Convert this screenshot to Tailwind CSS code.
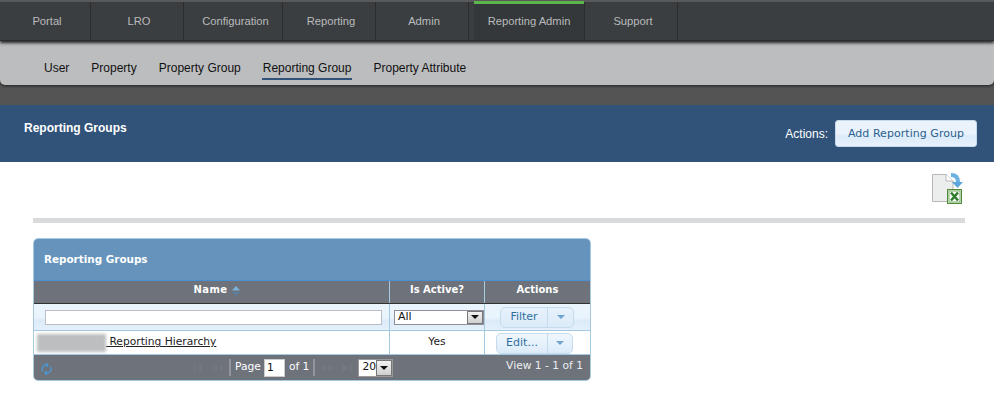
<!DOCTYPE html>
<html><head><meta charset="utf-8">
<script src="https://cdn.jsdelivr.net/npm/@tailwindcss/browser@4"></script>
</head>
<body class="bg-white w-[994px] h-[412px] overflow-hidden font-['Liberation_Sans',sans-serif]">
<div class="bg-[#545454] h-[105px] flex flex-col">
  <nav class="h-[41px] flex bg-[#3b3e40] border-t-2 border-[#58595a] border-b border-b-[#2c2c2c] text-[11.200px] text-[#b9bbbd] shrink-0 shadow-[0_2px_3px_#222] relative z-10">
    <a class="w-[91px] flex items-center justify-center border-r border-[#2a2c2e] pt-[1px] pl-[4px]">Portal</a>
    <a class="w-[93px] flex items-center justify-center border-r border-[#2a2c2e] pt-[1px] pl-[4px]">LRO</a>
    <a class="w-[99px] flex items-center justify-center border-r border-[#2a2c2e] pt-[1px] pl-[5px]">Configuration</a>
    <a class="w-[93px] flex items-center justify-center border-r border-[#2a2c2e] pt-[1px] pl-[4px]">Reporting</a>
    <a class="w-[93px] flex items-center justify-center border-r border-[#2a2c2e] pt-[1px] pl-[4px]">Admin</a>
    <div class="w-[116px] flex border-r border-[#2a2c2e] pl-[5px]"><a class="flex-1 flex items-center justify-center border-t-[3px] border-[#5cb54a] -mt-[1px] bg-[#35383a] pb-[1px]">Reporting Admin</a></div>
    <a class="w-[93px] flex items-center justify-center border-r border-[#2a2c2e] pt-[1px] pl-[4px]">Support</a>
  </nav>
  <div class="h-[44px] bg-[#bcbdbf] rounded-b-[5px] flex items-center pl-[44px] gap-[22px] text-[12px] text-[#111] shadow-[0_1px_3px_#222] pt-[11px]">
    <a class="pb-[2px]">User</a>
    <a class="pb-[2px]">Property</a>
    <a class="pb-[2px]">Property Group</a>
    <a class="pb-[1px] border-b-2 border-[#31537a] px-[1px] -mx-[1px] mt-[1px]">Reporting Group</a>
    <a class="pb-[2px]">Property Attribute</a>
  </div>
</div>
<header class="h-[57px] bg-[#31537a] flex justify-between items-start text-white text-[12px] pl-[24px] pr-[17px]">
  <h1 class="font-bold mt-[14px]">Reporting Groups</h1>
  <div class="flex items-center gap-[7px] mt-[15px]">
    <span>Actions:</span>
    <button class="w-[142px] h-[27px] pt-[1px] rounded-[3px] bg-[linear-gradient(#eaf3fb_50%,#dcebf9_60%,#e6f1fb)] border border-[#c5dbec] text-[#2a5f8f] font-['DejaVu_Sans',sans-serif] text-[11px] tracking-[0.050px]">Add Reporting Group</button>
  </div>
</header>
<main class="px-[33px] relative">
  <div class="flex justify-end -mr-[2px] h-[56px] items-start pt-[11px]">
    <svg width="32" height="33" viewBox="0 0 32 33">
      <path d="M1.500 1.500H15L22 8V28.500H1.500Z" fill="#eceded" stroke="#b5b6b8"/>
      <path d="M15 1.500V8H22" fill="#fff" stroke="#b5b6b8"/>
      <path d="M20 2C25 2 27 5 27 9" fill="none" stroke="#6db0e2" stroke-width="4"/>
      <path d="M21 9H32L26.500 15Z" fill="#5ba5dd"/>
      <rect x="16.500" y="16.500" width="14" height="14" fill="#e8f3e2" stroke="#4e8a3a"/>
      <rect x="18" y="18" width="11" height="11" fill="#fff" stroke="#79a967"/>
      <path d="M20 19.500L27 27.500M27 19.500L20 27.500" stroke="#2f7d2b" stroke-width="2.500"/>
    </svg>
  </div>
  <div class="h-[5px] bg-[#d9dadb] w-[932px]"></div>
  <section class="mt-[15px] w-[558px] h-[143px] rounded-[5px] border border-[#a6c9e2] overflow-hidden font-['DejaVu_Sans',sans-serif] text-[10.700px] text-[#222]">
    <div class="h-[42px] bg-[#6693bb] text-white font-bold text-[10.400px] flex items-center pl-[10px] border-b border-[#4a90d0] pt-[1px]">Reporting Groups</div>
    <div class="grid grid-cols-[356px_95px_105px] h-[23px] bg-[#6d727b] text-white font-bold text-[10px] border-b border-[#333] text-center">
      <div class="border-r border-[#a6c9e2] pt-[1px] flex justify-center gap-[5px] pl-[11px]"><span class="tracking-[0.400px]">Name</span>
        <svg class="mt-[4px]" width="8" height="10" viewBox="0 0 8 10"><path d="M0 4.500L4 0L8 4.500Z" fill="#7db3dd"/><path d="M0 6H8L4 10Z" fill="#5d7f9f"/></svg>
      </div>
      <div class="border-r border-[#a6c9e2] pt-[1px]">Is Active?</div>
      <div class="pt-[1px]">Actions</div>
    </div>
    <div class="grid grid-cols-[356px_95px_105px] h-[27px] bg-[linear-gradient(#eaf4fd_50%,#dcebf9_65%,#e4f0fb)] border-b border-[#a6c9e2]">
      <div class="border-r border-[#a6c9e2] flex items-center pl-[11px]"><input class="w-[337px] h-[15px] bg-white border border-[#bdbdc5] outline-none"></div>
      <div class="border-r border-[#a6c9e2] flex items-center pl-[4px]">
        <div class="w-[90px] h-[15px] bg-white border border-[#8e8f99] flex justify-between items-center pl-[3px] text-[11px] text-[#111]"><span>All</span><i class="w-[16px] h-[13px] bg-[linear-gradient(#f2f2f2,#cfcfcf)] border border-[#777] flex items-center justify-center"><svg width="8" height="4" viewBox="0 0 8 4"><path d="M0 0H8L4 4Z" fill="#111"/></svg></i></div>
      </div>
      <div class="flex items-center pl-[15px]">
        <div class="flex h-[21px] w-[74px] rounded-[5px] border border-[#c5dbec] bg-[linear-gradient(#e6f1fb,#dcebf9)] text-[#2e6e9e] text-[11px]"><span class="w-[47px] flex items-center justify-center border-r border-[#c5dbec]">Filter</span><span class="flex-1 flex items-center justify-center"><svg width="8" height="4" viewBox="0 0 8 4"><path d="M0 0H8L4 4Z" fill="#6ea3cf"/></svg></span></div>
      </div>
    </div>
    <div class="grid grid-cols-[356px_95px_105px] h-[24px] bg-white border-b border-[#a6c9e2]">
      <div class="border-r border-[#a6c9e2] flex items-center pl-[3px]"><span class="underline flex items-center h-[18px]"><i class="inline-block w-[69px] h-[18px] bg-[#bdbebf] blur-[1.500px]"></i><span>&nbsp;Reporting Hierarchy</span></span></div>
      <div class="border-r border-[#a6c9e2] flex items-center justify-center">Yes</div>
      <div class="flex items-center pl-[11px] pt-[1px]">
        <div class="flex h-[21px] w-[77px] rounded-[5px] border border-[#c5dbec] bg-[linear-gradient(#f0f7fd,#dcebf9)] text-[#2e6e9e] text-[11px]"><span class="w-[51px] flex items-center justify-center border-r border-[#c5dbec]">Edit...</span><span class="flex-1 flex items-center justify-center"><svg width="8" height="4" viewBox="0 0 8 4"><path d="M0 0H8L4 4Z" fill="#6ea3cf"/></svg></span></div>
      </div>
    </div>
    <div class="h-[25px] bg-[#6d727b] text-white flex items-center relative">
      <svg class="ml-[7px] mt-[2px]" width="11" height="12" viewBox="0 0 11 12" fill="none" stroke="#4a9ad8" stroke-width="1.200"><path d="M2 8.500A4 4 0 0 1 6 2M9 3.500A4 4 0 0 1 5 10"/><path d="M5 0L7 2L5 4M6 8L4 10L6 12"/></svg>
      <div class="ml-[142px] flex items-center h-full">
        <svg width="29" height="8" viewBox="0 0 29 8" fill="#73787f"><path d="M0 0H1.500V8H0ZM8 0V8L2 4ZM23 0V8L18 4ZM29 0V8L24 4Z"/></svg>
        <i class="w-[2px] h-[17px] bg-[#92959b] ml-[6px] mr-[4px]"></i>
        <span>Page</span>
        <span class="ml-[3px] w-[21px] h-[18px] bg-white border border-[#ccc] text-[#111] pl-[2px] leading-[16px]">1</span>
        <span class="ml-[4px]">of 1</span>
        <i class="w-[2px] h-[17px] bg-[#92959b] ml-[4px] mr-[8px]"></i>
        <svg width="29" height="8" viewBox="0 0 29 8" fill="#73787f"><path d="M0 0V8L5 4ZM6 0V8L11 4ZM19 0V8L26 4ZM27 0H29V8H27Z"/></svg>
        <div class="ml-[6px] w-[35px] h-[18px] bg-white border border-[#999] flex items-center justify-between pl-[3px] text-[#111]"><span>20</span><i class="w-[16px] h-[16px] bg-[linear-gradient(#f2f2f2,#cfcfcf)] border border-[#777] flex items-center justify-center"><svg width="8" height="4" viewBox="0 0 8 4"><path d="M0 0H8L4 4Z" fill="#111"/></svg></i></div>
      </div>
      <span class="absolute right-[7px] top-[3px] text-[#eee]">View 1 - 1 of 1</span>
    </div>
  </section>
</main>
</body></html>
